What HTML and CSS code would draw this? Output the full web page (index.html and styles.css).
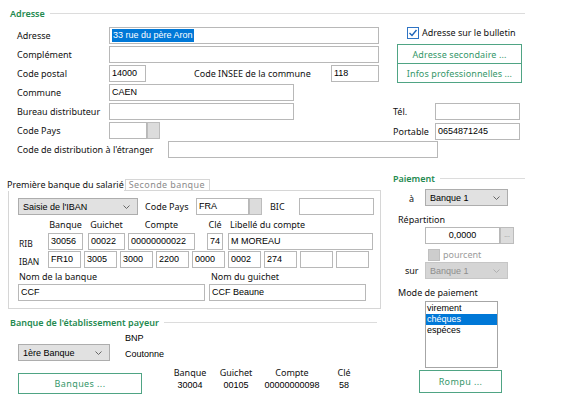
FILE: index.html
```html
<!DOCTYPE html>
<html lang="fr">
<head>
<meta charset="utf-8">
<title>Adresse</title>
<link rel="stylesheet" href="styles.css">
</head>
<body>
<div class="dialog">
  <div class="gtitle gt-top"><span>Adresse</span></div>
  <div class="top">
    <div class="top-left">
      <div class="row"><span class="lbl l92">Adresse</span><div class="field w270"><span class="hl">33 rue du père Aron</span></div></div>
      <div class="row"><span class="lbl l92">Complément</span><div class="field w270"></div></div>
      <div class="row"><span class="lbl l92">Code postal</span><div class="field w37">14000</div><span class="lbl insee">Code INSEE de la commune</span><div class="field w48">118</div></div>
      <div class="row"><span class="lbl l92">Commune</span><div class="field w185">CAEN</div></div>
      <div class="row"><span class="lbl l92">Bureau distributeur</span><div class="field w185"></div></div>
      <div class="row"><span class="lbl l92">Code Pays</span><div class="field w38"></div><div class="mini"></div></div>
    </div>
    <div class="top-right">
      <div class="chk-row">
        <span class="chk on"><svg width="10" height="10" viewBox="0 0 10 10"><polyline points="1.5,5 4,7.5 8.5,2" fill="none" stroke="#1d64b8" stroke-width="1.4"/></svg></span>
        <span class="lbl">Adresse sur le bulletin</span>
      </div>
      <div class="btn b-sec">Adresse secondaire ...</div>
      <div class="btn b-pro">Infos professionnelles ...</div>
      <div class="row r-tel"><span class="lbl l42">Tél.</span><div class="field w85"></div></div>
      <div class="row r-port"><span class="lbl l42">Portable</span><div class="field w85">0654871245</div></div>
    </div>
  </div>
  <div class="row r-etr"><span class="lbl l151">Code de distribution à l'étranger</span><div class="field w270"></div></div>

  <div class="mid">
    <div class="mid-left">
      <div class="tabs">
        <div class="tab active">Première banque du salarié</div>
        <div class="tab">Seconde banque</div>
      </div>
      <div class="panel">
        <div class="prow">
          <div class="select w120"><span>Saisie de l'IBAN</span><svg class="chev" width="7" height="4" viewBox="0 0 7 4"><polyline points="0.5,0.5 3.5,3.5 6.5,0.5" fill="none" stroke="#666" stroke-width="1"/></svg></div>
          <span class="lbl cp">Code Pays</span>
          <div class="field w53">FRA</div><div class="mini"></div>
          <span class="lbl bic">BIC</span>
          <div class="field w75"></div>
        </div>
        <div class="rib head">
          <span class="rl"></span>
          <span class="c1">Banque</span><span class="c2">Guichet</span><span class="c3">Compte</span><span class="c4">Clé</span><span class="c5 left">Libellé du compte</span>
        </div>
        <div class="rib">
          <span class="rl">RIB</span>
          <div class="field c1">30056</div><div class="field c2">00022</div><div class="field c3">00000000022</div><div class="field c4">74</div><div class="field c5">M MOREAU</div>
        </div>
        <div class="iban">
          <span class="rl">IBAN</span>
          <div class="field">FR10</div><div class="field">3005</div><div class="field">3000</div><div class="field">2200</div><div class="field">0000</div><div class="field">0002</div><div class="field">274</div><div class="field"></div><div class="field"></div>
        </div>
        <div class="noms">
          <span class="lbl nl1">Nom de la banque</span>
          <span class="lbl nl2">Nom du guichet</span>
          <div class="field w187">CCF</div>
          <div class="field w157">CCF Beaune</div>
        </div>
      </div>

      <div class="gtitle gt-bank"><span>Banque de l'établissement payeur</span></div>
      <div class="bank">
        <div class="bank-r1">
          <div class="select w92 b1"><span>1ère Banque</span><svg class="chev" width="7" height="4" viewBox="0 0 7 4"><polyline points="0.5,0.5 3.5,3.5 6.5,0.5" fill="none" stroke="#666" stroke-width="1"/></svg></div>
          <div class="bname"><div>BNP</div><div>Coutonne</div></div>
        </div>
        <div class="bank-r2">
          <div class="btn b-banques">Banques ...</div>
          <div class="nums">
            <div class="num n1"><span class="nh">Banque</span><span class="nv">30004</span></div>
            <div class="num n2"><span class="nh">Guichet</span><span class="nv">00105</span></div>
            <div class="num n3"><span class="nh">Compte</span><span class="nv">00000000098</span></div>
            <div class="num n4"><span class="nh">Clé</span><span class="nv">58</span></div>
          </div>
        </div>
      </div>
    </div>

    <div class="mid-right">
      <div class="gtitle gt-pay"><span>Paiement</span></div>
      <div class="prow2 pay-a"><span class="lbl pl-a">à</span>
        <div class="select w83"><span>Banque 1</span><svg class="chev" width="7" height="4" viewBox="0 0 7 4"><polyline points="0.5,0.5 3.5,3.5 6.5,0.5" fill="none" stroke="#666" stroke-width="1"/></svg></div>
      </div>
      <div class="lbl plbl rep">Répartition</div>
      <div class="prow2 pay-val"><div class="field w75 ctr">0,0000</div><div class="mini dots">...</div></div>
      <div class="prow2 pay-pct"><span class="chk dis"></span><span class="lbl grey">pourcent</span></div>
      <div class="prow2 pay-sur"><span class="lbl pl-sur">sur</span>
        <div class="select w83 disabled"><span>Banque 1</span><svg class="chev" width="7" height="4" viewBox="0 0 7 4"><polyline points="0.5,0.5 3.5,3.5 6.5,0.5" fill="none" stroke="#b0b0b0" stroke-width="1"/></svg></div>
      </div>
      <div class="lbl plbl mode">Mode de paiement</div>
      <div class="listbox">
        <div class="item">virement</div>
        <div class="item sel">chéques</div>
        <div class="item">espéces</div>
      </div>
      <div class="btn rompu">Rompu ...</div>
    </div>
  </div>
</div>
</body>
</html>
```

FILE: styles.css
```css
* { box-sizing: border-box; }
body {
  margin: 0;
  background: #fff;
  font-family: "Noto Sans", "Open Sans", sans-serif;
  font-size: 9px;
  color: #111;
}
.dialog { width: 576px; height: 411px; padding-top: 7px; overflow: hidden; }

/* group titles */
.gtitle {
  display: flex; align-items: center; height: 13px;
  color: #23894f; font-weight: 600; white-space: nowrap;
}
.gtitle::after { content: ""; flex: 1; border-top: 1px solid #dcdcdc; margin-left: 5px; }
.gt-top { margin-left: 10px; width: 515px; }
.gt-bank { margin-left: 10px; width: 367px; height: 14px; margin-top: 6px; }
.gt-pay { width: 132px; height: 14px; }

.lbl { white-space: nowrap; line-height: 12px; }
.l92 { width: 92px; }
.l42 { width: 42px; }
.l151 { width: 151px; }

/* fields */
.field {
  height: 17px; border: 1px solid #b8b8b8; background: #fff;
  font-family: "Liberation Sans", Arial, sans-serif; font-size: 9px; color: #000;
  line-height: 15px; padding-left: 2px; white-space: nowrap; overflow: hidden;
}
.ctr { text-align: center; padding-left: 0; }
.hl { background: #0078d7; color: #fff; display: inline-block; line-height: 13px; padding: 0 1px; }
.w270 { width: 270px; } .w37 { width: 37px; } .w48 { width: 48px; }
.w185 { width: 185px; } .w38 { width: 38px; } .w85 { width: 85px; }
.w53 { width: 53px; } .w75 { width: 75px; } .w187 { width: 187px; } .w157 { width: 157px; }

.mini { width: 13px; height: 17px; background: #dcdcdc; border: 1px solid #bcbcbc; }
.dots { width: 14px; color: #a8a8a8; font-size: 7px; line-height: 13px; text-align: center; }

.select {
  height: 17px; border: 1px solid #adadad; background: #e1e1e1;
  display: flex; align-items: center; justify-content: space-between;
  padding: 0 7px 0 4px;
  font-family: "Liberation Sans", Arial, sans-serif; font-size: 9px; color: #000;
}
.select.disabled { background: #d5d5d5; border-color: #c6c6c6; color: #8e8e8e; }
.w120 { width: 120px; } .w92 { width: 92px; } .w83 { width: 83px; }

.btn {
  border: 1px solid #4fa484; color: #35976a; background: #fff;
  display: flex; align-items: center; justify-content: center;
  white-space: nowrap; letter-spacing: 0.1px;
}

/* top section */
.top { display: flex; margin-top: 6px; }
.top-left { margin-left: 17px; width: 368px; }
.row { display: flex; align-items: center; height: 19px; }
.insee { margin-left: 48px; width: 137px; }
.top-right { margin-left: 8px; width: 132px; }
.chk-row { display: flex; align-items: center; height: 12px; margin-top: 1px; margin-left: 14px; }
.chk { width: 12px; height: 12px; border: 1px solid #7a7a7a; background: #fff; display: flex; align-items: center; justify-content: center; margin-right: 3px; }
.chk.on { border-color: #2f74c4; }
.chk.dis { background: #cdcdcd; border-color: #c0c0c0; }
.b-sec { margin-left: 4px; margin-top: 5px; width: 125px; height: 20px; }
.b-pro { margin-left: 4px; width: 125px; height: 19px; border-top: none; }
.r-tel { margin-top: 20px; height: 17px; }
.r-port { margin-top: 3px; height: 17px; }
.r-etr { margin-left: 17px; }

/* middle */
.mid { display: flex; margin-top: 12px; }
.mid-left { width: 385px; padding-top: 8px; }
.tabs { display: flex; margin-left: 7px; height: 11px; align-items: flex-end; }
.tab { height: 11px; line-height: 11px; white-space: nowrap; }
.tab.active { background: #fff; position: relative; z-index: 1; height: 12px; margin-bottom: -1px; }
.tab:not(.active) { border: 1px solid #d6d6d6; border-bottom: none; padding: 0 4px 0 3px; color: #8c8c8c; line-height: 10px; margin-left: 1px; letter-spacing: 0.4px; }

.panel { margin-left: 8px; width: 373px; border: 1px solid #d6d6d6; padding: 7px 0 7px 9px; }
.prow { display: flex; align-items: center; height: 17px; }
.cp { margin-left: 7px; width: 51px; }
.bic { margin-left: 8px; width: 29px; }

.rib, .iban { display: flex; align-items: center; height: 17px; }
.rib.head { height: 10px; margin-top: 5px; }
.rib.head span { line-height: 10px; text-align: center; white-space: nowrap; }
.rib.head .left { text-align: left; padding-left: 2px; }
.rib:not(.head) { margin-top: 3px; }
.iban { margin-top: 1px; }
.rl { width: 30px; padding-left: 1px; line-height: 12px; padding-top: 4px; font-size: 8.5px; }
.c1 { width: 35px; } .c2 { width: 37px; margin-left: 5px; } .c3 { width: 67px; margin-left: 3px; }
.c4 { width: 16px; margin-left: 12px; } .c5 { width: 145px; margin-left: 5px; }
.iban .field { width: 33px; margin-right: 3px; }

.noms { display: grid; grid-template-columns: 191px 157px; margin-top: 3px; }
.nl1 { padding-left: 1px; height: 11px; line-height: 11px; }
.nl2 { padding-left: 2px; height: 11px; line-height: 11px; }
.noms .field { margin-top: 2px; }

/* banque établissement */
.bank { margin-left: 18px; margin-top: 1px; }
.bank-r1 { display: flex; }
.b1 { margin-top: 14px; }
.bname { margin-left: 15px; font-family: "Liberation Sans", Arial, sans-serif; line-height: 16px; color: #000; }
.bank-r2 { display: flex; }
.b-banques { width: 124px; height: 21px; margin-top: 11px; letter-spacing: 0.4px; }
.nums { display: flex; margin-left: 30px; margin-top: 5px; }
.num { display: flex; flex-direction: column; align-items: center; line-height: 12px; }
.nv { font-family: "Liberation Sans", Arial, sans-serif; color: #000; line-height: 13px; }
.n1 { width: 36px; } .n2 { width: 36px; margin-left: 10px; } .n3 { width: 56px; margin-left: 10px; } .n4 { width: 28px; margin-left: 10px; }

/* paiement */
.mid-right { margin-left: 8px; width: 132px; }
.prow2 { display: flex; align-items: center; }
.pay-a { margin-top: 4px; height: 17px; }
.pl-a { width: 32px; padding-left: 16px; padding-top: 2px; }
.plbl { margin-left: 5px; height: 12px; }
.rep { margin-top: 8px; }
.pay-val { margin-top: 1px; margin-left: 32px; height: 17px; }
.pay-pct { margin-top: 4px; margin-left: 35px; height: 13px; }
.grey { color: #9b9b9b; }
.pay-sur { margin-top: 1px; height: 17px; }
.pl-sur { width: 32px; padding-left: 12px; }
.mode { margin-top: 8px; }
.listbox {
  margin-top: 2px; margin-left: 32px; width: 73px; height: 67px;
  border: 1px solid #a6a6a6; padding-top: 1px;
  font-family: "Liberation Sans", Arial, sans-serif; font-size: 9px; color: #000;
}
.item { height: 11px; line-height: 11px; padding-left: 1px; }
.item.sel { background: #0078d7; color: #fff; }
.rompu { margin-top: 2px; margin-left: 26px; width: 83px; height: 23px; letter-spacing: 0.4px; }
```
